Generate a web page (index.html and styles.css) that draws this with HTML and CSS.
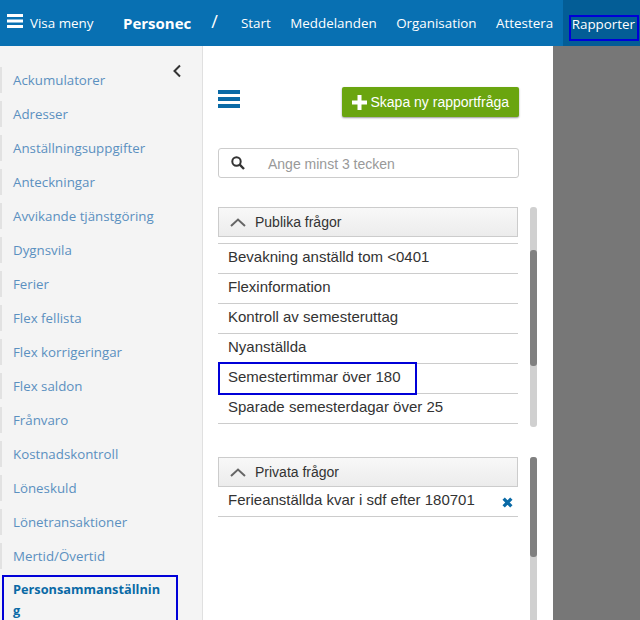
FILE: index.html

```html
<!DOCTYPE html>
<html>
<head>
    <title>Rapporter</title>
    <link rel="stylesheet" href="styles.css">
</head>
<body>

    <div class="topbar">
        <a class="show-menu">
            <svg class="burger" width="16" height="14" viewBox="0 0 16 14"><path d="M0 0h16v3H0zM0 5.500h16v3H0zM0 11h16v3H0z" fill="#fff"/></svg>
            Visa meny
        </a>
        <span class="brand">Personec</span>
        <span class="slash">/</span>
        <nav class="nav">
            <a>Start</a>
            <a>Meddelanden</a>
            <a>Organisation</a>
            <a>Attestera</a>
            <a class="active"><span class="mark">Rapporter</span></a>
        </nav>
    </div>

    <div class="page">
        <div class="sidebar">
            <svg class="collapse" width="10" height="14" viewBox="0 0 10 14"><path d="M8 1.500L2.500 7 8 12.500" fill="none" stroke="#333" stroke-width="2"/></svg>
            <ul class="side-list">
                <li>Ackumulatorer</li>
                <li>Adresser</li>
                <li>Anställningsuppgifter</li>
                <li>Anteckningar</li>
                <li>Avvikande tjänstgöring</li>
                <li>Dygnsvila</li>
                <li>Ferier</li>
                <li>Flex fellista</li>
                <li>Flex korrigeringar</li>
                <li>Flex saldon</li>
                <li>Frånvaro</li>
                <li>Kostnadskontroll</li>
                <li>Löneskuld</li>
                <li>Lönetransaktioner</li>
                <li>Mertid/Övertid</li>
                <li class="current">Personsammanställnin<br>g</li>
            </ul>
        </div>

        <div class="main">
            <div class="toolbar">
                <svg width="22" height="18" viewBox="0 0 22 18"><path d="M0 0h22v4H0zM0 7h22v4H0zM0 14h22v4H0z" fill="#0a6aa6"/></svg>
                <button class="create">
                    <svg width="15" height="15" viewBox="0 0 15 15"><path d="M5.500 0h4v5.500H15v4H9.500V15h-4V9.500H0v-4h5.500z" fill="#fff"/></svg>
                    Skapa ny rapportfråga
                </button>
            </div>

            <div class="search">
                <svg width="14" height="14" viewBox="0 0 14 14"><circle cx="5.500" cy="5.500" r="4.200" fill="none" stroke="#333" stroke-width="2"/><path d="M8.700 8.700L13 13" stroke="#333" stroke-width="2.400"/></svg>
                <span>Ange minst 3 tecken</span>
            </div>

            <div class="section public">
                <div class="scroll"><div class="thumb"></div></div>
                <div class="section-head">
                    <svg width="16" height="9" viewBox="0 0 16 9"><path d="M1 8l7-6.500L15 8" fill="none" stroke="#666" stroke-width="2"/></svg>
                    Publika frågor
                </div>
                <ul class="reports">
                    <li>Bevakning anställd tom &lt;0401</li>
                    <li>Flexinformation</li>
                    <li>Kontroll av semesteruttag</li>
                    <li>Nyanställda</li>
                    <li class="picked">Semestertimmar över 180</li>
                    <li>Sparade semesterdagar över 25</li>
                </ul>
            </div>

            <div class="section private">
                <div class="scroll"><div class="thumb"></div></div>
                <div class="section-head">
                    <svg width="16" height="9" viewBox="0 0 16 9"><path d="M1 8l7-6.500L15 8" fill="none" stroke="#666" stroke-width="2"/></svg>
                    Privata frågor
                </div>
                <ul class="reports own">
                    <li>Ferieanställda kvar i sdf efter 180701
                        <svg class="remove" width="11" height="11" viewBox="0 0 10 10"><path d="M1.500 1.500l7 7M8.500 1.500l-7 7" stroke="#0a6aa6" stroke-width="3"/></svg>
                    </li>
                </ul>
            </div>
        </div>

        <div class="shade"></div>
    </div>

</body>
</html>
```

FILE: styles.css

```css
html, body {
    margin: 0;
    height: 620px;
    overflow: hidden;
}
body {
    font-family: "Liberation Sans", Arial, sans-serif;
    color: #333;
}
ul {
    list-style: none;
    margin: 0;
    padding: 0;
}
.topbar {
    display: flex;
    align-items: center;
    height: 46px;
    background-color: #0870b2;
    color: #fff;
    font-family: "Open Sans", sans-serif;
    font-size: 13.400px;
}
.show-menu {
    display: flex;
    align-items: center;
    flex-shrink: 0;
    gap: 7px;
    margin-left: 7px;
    width: 116px;
}
.burger {
    margin-top: -4px;
}
.brand {
    flex-shrink: 0;
    font-weight: 700;
    font-size: 15px;
}
.slash {
    flex-shrink: 0;
    margin-left: 20px;
    margin-top: -4px;
    font-size: 18px;
}
.nav {
    display: flex;
    align-items: center;
    flex-grow: 1;
    gap: 19.500px;
    margin-left: 23px;
}
.nav a {
    white-space: nowrap;
}
.nav .active {
    display: flex;
    align-items: center;
    flex-grow: 1;
    height: 46px;
    margin-left: -10px;
    padding-left: 6px;
    background-color: #035d96;
}
.mark {
    display: block;
    width: 65px;
    margin-top: 10px;
    padding: 0 0 8px 1px;
    border: 2px solid #0000d8;
    line-height: 14px;
}
.page {
    display: flex;
    height: 574px;
}
.sidebar {
    position: relative;
    flex-shrink: 0;
    width: 203px;
    box-sizing: border-box;
    padding-top: 21px;
    background-color: #f4f4f4;
    border-right: 1px solid #e0e0e0;
    font-family: "Open Sans", sans-serif;
    font-size: 13.300px;
    color: #5b90c0;
}
.collapse {
    position: absolute;
    top: 18px;
    left: 172px;
}
.side-list li {
    height: 26px;
    line-height: 26px;
    margin-bottom: 8px;
    padding-left: 11px;
    border-left: 2px solid #e2e2e2;
    white-space: nowrap;
}
.side-list .current {
    height: auto;
    width: 163px;
    margin: -2px 0 0 2px;
    padding: 2px 0 0 9px;
    border: 2px solid #0000d8;
    font-size: 12.750px;
    font-weight: 700;
    line-height: 21px;
    color: #0a6aa6;
}
.main {
    flex-shrink: 0;
    width: 350px;
    box-sizing: border-box;
    padding: 0 34px 0 15px;
    background-color: #fff;
}
.toolbar {
    display: flex;
    justify-content: space-between;
    align-items: center;
    height: 30px;
    margin-top: 41px;
}
.toolbar > svg {
    margin-top: -6px;
}
.create {
    display: flex;
    align-items: center;
    gap: 3px;
    height: 30px;
    padding: 0 10px;
    border: none;
    border-radius: 2px;
    background-color: #6aa50f;
    box-shadow: 0 1px 2px #999;
    color: #fff;
    font-family: "Liberation Sans", Arial, sans-serif;
    font-size: 14px;
}
.search {
    display: flex;
    align-items: center;
    gap: 23px;
    height: 28px;
    margin-top: 31px;
    padding-left: 12px;
    border: 1px solid #ccc;
    border-radius: 3px;
    color: #999;
    font-size: 14px;
}
.search span {
    padding-top: 2px;
}
.section {
    position: relative;
    margin-right: 1px;
}
.public {
    margin-top: 29px;
    height: 220px;
}
.private {
    margin-top: 30px;
}
.scroll {
    position: absolute;
    top: 0;
    left: 312px;
    width: 7px;
    height: 220px;
    border-radius: 3px;
    background-color: #d0d0d0;
}
.private .scroll {
    height: 170px;
}
.thumb {
    position: relative;
    top: 43px;
    height: 116px;
    border-radius: 3px;
    background-color: #808080;
}
.private .thumb {
    top: 0;
    height: 100px;
}
.section-head {
    display: flex;
    align-items: center;
    gap: 9px;
    height: 28px;
    padding-left: 11px;
    border: 1px solid #ccc;
    background: linear-gradient(#f8f8f8, #ececec);
    font-size: 14px;
}
.reports {
    margin-top: 6px;
    border-top: 1px solid #ccc;
    font-size: 15px;
}
.reports li {
    position: relative;
    height: 29px;
    line-height: 25px;
    padding-left: 10px;
    border-bottom: 1px solid #ccc;
}
.reports .picked::after {
    content: "";
    position: absolute;
    top: -2px;
    left: 0;
    width: 195px;
    height: 29px;
    border: 2px solid #0000d8;
}
.own {
    margin-top: 0;
    border-top: none;
}
.own li {
    line-height: 26px;
}
.remove {
    position: absolute;
    top: 10px;
    right: 5px;
}
.shade {
    flex-grow: 1;
    background-color: #777;
}
```
